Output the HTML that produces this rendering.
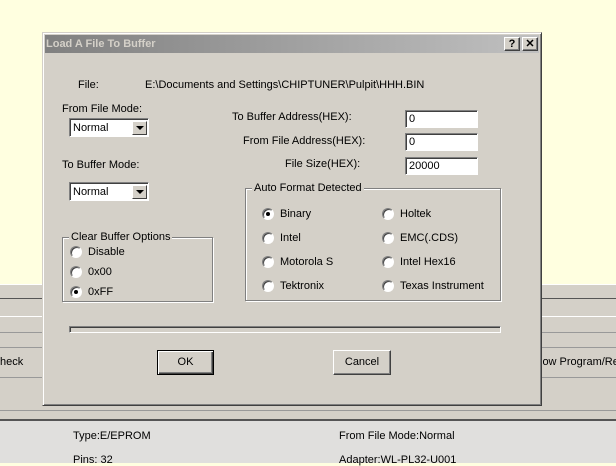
<!DOCTYPE html><html><head><style>
*{margin:0;padding:0;box-sizing:border-box}
body{width:616px;height:463px;overflow:hidden;position:relative;background:#ffffe0;font-family:"Liberation Sans",Arial,sans-serif;font-size:11px;color:#000}
.a{position:absolute}
.t{position:absolute;white-space:nowrap;line-height:12px}
.hl{position:absolute;left:0;width:616px;height:1px}
.inp{position:absolute;background:#fff;border-top:1px solid #808080;border-left:1px solid #808080;border-right:1px solid #fff;border-bottom:1px solid #fff;box-shadow:inset 1px 1px 0 #404040, 0 0 0 0 #d4d0c8;padding:2px 0 0 3px;line-height:12px}
.grp{position:absolute;border:1px solid #808080;box-shadow:1px 1px 0 #fff, inset 1px 1px 0 #fff}
.lg{position:absolute;top:-7px;left:6px;background:#d4d0c8;padding:0 2px;line-height:12px}
.r{position:absolute;width:12px;height:12px;border-radius:50%;background:#fff;border:1px solid;border-color:#808080 #fff #fff #808080;box-shadow:inset 1px 1px 0 #404040}
.r.on::after{content:"";position:absolute;left:3px;top:3px;width:4px;height:4px;border-radius:50%;background:#000}
.btn{position:absolute;background:#d4d0c8;border:1px solid;border-color:#fff #404040 #404040 #fff;box-shadow:inset -1px -1px 0 #808080;text-align:center}
.combo{position:absolute;width:80px;height:19px;background:#fff;border:1px solid;border-color:#808080 #fff #fff #808080;box-shadow:inset 1px 1px 0 #404040}
.combo span{position:absolute;left:3px;top:3px}
.combo i{position:absolute;right:1px;top:2px;width:15px;height:14px;background:#d4d0c8;border:1px solid;border-color:#fff #404040 #404040 #fff}
.combo i::after{content:"";position:absolute;left:3px;top:4px;border-left:4px solid transparent;border-right:4px solid transparent;border-top:4px solid #000}
</style></head><body>
<!-- background app -->
<div class="a" style="left:0;top:284px;width:616px;height:137px;background:#d4d0c8"></div>
<div class="hl" style="top:284px;background:#fff"></div>
<div class="hl" style="top:298px;background:#555"></div>
<div class="hl" style="top:316px;background:#fff"></div>
<div class="hl" style="top:332px;background:#999"></div>
<div class="hl" style="top:347px;background:#999"></div>
<div class="hl" style="top:377px;background:#999"></div>
<div class="hl" style="top:410px;background:#999"></div>
<div class="hl" style="top:419px;height:2px;background:#555"></div>
<div class="a" style="left:0;top:421px;width:616px;height:42px;background:#e0dfdd"></div>
<div class="t" style="left:0;top:356px">heck</div>
<div class="t" style="left:540px;top:356px">low Program/Re</div>
<div class="t" style="left:73px;top:430px">Type:E/EPROM</div>
<div class="t" style="left:73px;top:454px">Pins: 32</div>
<div class="t" style="left:339px;top:430px">From File Mode:Normal</div>
<div class="t" style="left:339px;top:454px">Adapter:WL-PL32-U001</div>

<!-- dialog -->
<div class="a" style="left:42px;top:32px;width:500px;height:374px;background:#d4d0c8;border:1px solid;border-color:#d4d0c8 #404040 #404040 #d4d0c8;box-shadow:inset 1px 1px 0 #fff, inset -1px -1px 0 #808080"></div>
<div class="a" style="left:45px;top:35px;width:494px;height:18px;background:linear-gradient(90deg,#808080,#c0c0c0)"></div>
<div class="t" style="left:46px;top:38px;font-weight:bold;color:#d4d0c8">Load A File To Buffer</div>
<div class="btn" style="left:504px;top:37px;width:16px;height:14px;font-weight:bold;line-height:12px">?</div>
<div class="btn" style="left:522px;top:37px;width:16px;height:14px;font-weight:bold;line-height:12px">✕</div>

<div class="t" style="left:78px;top:79px">File:</div>
<div class="t" style="left:145px;top:79px">E:\Documents and Settings\CHIPTUNER\Pulpit\HHH.BIN</div>
<div class="t" style="left:62px;top:103px">From File Mode:</div>
<div class="combo" style="left:69px;top:118px"><span>Normal</span><i></i></div>
<div class="t" style="left:62px;top:159px">To Buffer Mode:</div>
<div class="combo" style="left:69px;top:182px"><span>Normal</span><i></i></div>

<div class="t" style="left:232px;top:111px">To Buffer Address(HEX):</div>
<div class="t" style="left:243px;top:135px">From File Address(HEX):</div>
<div class="t" style="left:285px;top:158px">File Size(HEX):</div>
<div class="inp" style="left:405px;top:110px;width:73px;height:18px">0</div>
<div class="inp" style="left:405px;top:133px;width:73px;height:18px">0</div>
<div class="inp" style="left:405px;top:157px;width:73px;height:18px">20000</div>

<div class="grp" style="left:245px;top:188px;width:256px;height:113px"><div class="lg">Auto Format Detected</div></div>
<div class="r on" style="left:262px;top:208px"></div><div class="t" style="left:280px;top:208px">Binary</div>
<div class="r" style="left:262px;top:232px"></div><div class="t" style="left:280px;top:232px">Intel</div>
<div class="r" style="left:262px;top:256px"></div><div class="t" style="left:280px;top:256px">Motorola S</div>
<div class="r" style="left:262px;top:280px"></div><div class="t" style="left:280px;top:280px">Tektronix</div>
<div class="r" style="left:382px;top:208px"></div><div class="t" style="left:400px;top:208px">Holtek</div>
<div class="r" style="left:382px;top:232px"></div><div class="t" style="left:400px;top:232px">EMC(.CDS)</div>
<div class="r" style="left:382px;top:256px"></div><div class="t" style="left:400px;top:256px">Intel Hex16</div>
<div class="r" style="left:382px;top:280px"></div><div class="t" style="left:400px;top:280px">Texas Instrument</div>

<div class="grp" style="left:62px;top:237px;width:151px;height:65px"><div class="lg">Clear Buffer Options</div></div>
<div class="r" style="left:70px;top:246px"></div><div class="t" style="left:88px;top:246px">Disable</div>
<div class="r" style="left:70px;top:266px"></div><div class="t" style="left:88px;top:266px">0x00</div>
<div class="r on" style="left:70px;top:286px"></div><div class="t" style="left:88px;top:286px">0xFF</div>

<div class="a" style="left:69px;top:326px;width:432px;height:7px;border:1px solid;border-color:#808080 #fff #fff #808080;box-shadow:inset 1px 1px 0 #404040"></div>

<div class="btn" style="left:157px;top:350px;width:57px;height:25px;border:1px solid #000;box-shadow:inset 1px 1px 0 #fff, inset -1px -1px 0 #404040, inset -2px -2px 0 #808080;line-height:22px">OK</div>
<div class="btn" style="left:333px;top:350px;width:58px;height:25px;line-height:22px">Cancel</div>
</body></html>
